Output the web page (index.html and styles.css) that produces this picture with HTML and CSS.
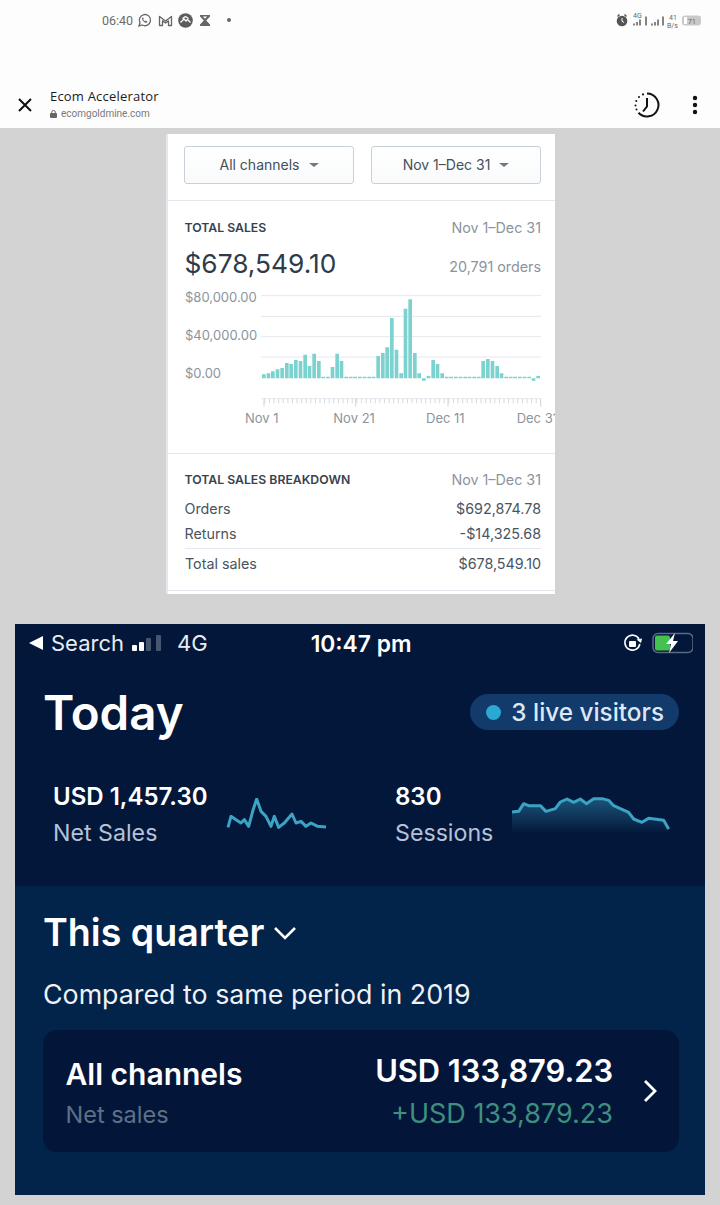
FILE: index.html
```html
<!DOCTYPE html>
<html lang="en">
<head>
  <meta charset="UTF-8" />
  <meta name="viewport" content="width=device-width, initial-scale=1.0"/>
  <title>Ecom Accelerator</title>
  <link rel="stylesheet" href="styles.css">
</head>
<body>

  <header class="browser">
    <div class="device-status">
      <div class="device-left">
        <span class="clock">06:40</span>
        <svg class="note" width="15" height="15" viewBox="0 0 15 15"><path d="M2 13l1-3.200a5.600 5.600 0 1 1 2.200 2.200z" fill="none" stroke="#666" stroke-width="1.300"/><path d="M5.300 4.700c-.8 1 .1 2.600 1.300 3.700s2.500 1.700 3.300 1l.4-1-1.500-.8-.7.700c-.9-.4-1.500-1-2-2l.6-.6-.7-1.500z" fill="#666"/></svg>
        <svg class="note" width="15" height="13" viewBox="0 0 15 13"><path d="M1.500 11.500V2.500L7.500 7l6-4.500v9h-3V6.800L7.500 9 4.500 6.800v4.700z" fill="none" stroke="#666" stroke-width="1.300" stroke-linejoin="round"/></svg>
        <svg class="note" width="15" height="15" viewBox="0 0 15 15"><circle cx="7.500" cy="7.500" r="7.300" fill="#5c5c5c"/><path d="M2.500 9.500L6 6l2 2 1.500-1.500 3 3M4.500 5.500L7.500 3.500l3 2" fill="none" stroke="#fff" stroke-width="1.300"/></svg>
        <svg class="note" width="12" height="13" viewBox="0 0 12 13"><path d="M1 1h10v1.500L7.200 6.500 11 10.500V12H1v-1.500l3.800-4L1 2.500z" fill="#666"/><path d="M3.800 2.400h4.400L6 4.800z" fill="#fff"/></svg>
        <span class="note-dot"></span>
      </div>
      <svg class="device-right" width="90" height="24" viewBox="615 8 90 24">
        <circle cx="622" cy="21" r="5.300" fill="#555"/>
        <path d="M617.500 16.500l2-2M626.500 16.500l-2-2" stroke="#555" stroke-width="1.500"/>
        <path d="M622 18v3.200l2 1.300" stroke="#fff" fill="none"/>
        <text class="tiny" x="633" y="18">4G</text>
        <path d="M634 25.500v-2M637 25.500v-3.500M640 25.500v-6M646 25.500v-9M652 25.500v-2M655 25.500v-3.500M658 25.500v-6M663 25.500v-9" stroke="#666" stroke-width="1.600"/>
        <text class="tiny" x="669" y="20">41</text>
        <text class="tiny" x="667" y="28">B/s</text>
        <rect x="682" y="15.500" width="19" height="10" rx="3" fill="#c9c9c9"/>
        <rect x="684" y="17" width="3" height="7" fill="#fff"/>
        <text class="tiny" x="688" y="24" font-size="8">71</text>
      </svg>
    </div>
    <div class="tab-row">
      <svg class="close-x" width="16" height="16" viewBox="0 0 16 16"><path d="M2 2l12 12M14 2L2 14" stroke="#111" stroke-width="2"/></svg>
      <div class="tab-title">
        <div class="tab-name">Ecom Accelerator</div>
        <div class="tab-url">
          <svg width="7" height="8" viewBox="0 0 7 8"><path d="M1.700 3.500V2.200a1.800 1.800 0 0 1 3.600 0v1.300" fill="none" stroke="#666"/><rect y="3" width="7" height="5" rx="1" fill="#666"/></svg>
          ecomgoldmine.com
        </div>
      </div>
      <svg class="history" width="28" height="28" viewBox="0 0 28 28">
        <path d="M14 2.500a11.500 11.500 0 1 1-8.500 19.300" fill="none" stroke="#111" stroke-width="2"/>
        <path d="M14 7v8.500l-4 5" fill="none" stroke="#111" stroke-width="2"/>
        <path d="M10 3.300v.1M6 6v.1M3.300 10v.1M2.500 14.500v.1M3.500 18.500v.1" stroke="#111" stroke-width="2" stroke-linecap="round"/>
      </svg>
      <svg class="kebab" width="6" height="20" viewBox="0 0 6 20"><circle cx="3" cy="3" r="2.200"/><circle cx="3" cy="10" r="2.200"/><circle cx="3" cy="17" r="2.200"/></svg>
    </div>
  </header>

  <section class="report">
    <div class="filters">
      <button class="filter">All channels <span class="caret"></span></button>
      <button class="filter">Nov 1–Dec 31 <span class="caret"></span></button>
    </div>

    <div class="sales">
      <div class="line-head">
        <span class="caps">TOTAL SALES</span>
        <span class="muted">Nov 1–Dec 31</span>
      </div>
      <div class="line-total">
        <span class="amount">$678,549.10</span>
        <span class="muted orders">20,791 orders</span>
      </div>
      <svg class="bars" width="389" height="150" viewBox="3 0 1167 450">
        <path d="M288 32H1128M288 94H1128M288 155H1128M288 216H1128M288 341H1128" stroke="#e4e8ee" stroke-width="3" fill="none"/>
        <path d="M298 348H1128" stroke="#d5dae0" stroke-width="14" stroke-dasharray="3 10.800" fill="none"/>
        <path d="M297 341v24M572 341v24M849 341v24M1127 341v24" stroke="#cfd5dc" stroke-width="3" fill="none"/>
        <path class="bar-fill" d="M291 268h11v12h-11zM305 265h11v15h-11zM318 259h11v21h-11zM332 253h11v27h-11zM346 249h11v31h-11zM360 234h11v46h-11zM373 237h11v43h-11zM387 225h11v55h-11zM401 228h11v52h-11zM415 209h11v71h-11zM428 243h11v37h-11zM442 206h11v74h-11zM456 228h11v52h-11zM469 275h11v5h-11zM483 275h11v5h-11zM497 246h11v34h-11zM511 206h11v74h-11zM524 228h11v52h-11zM538 275h11v5h-11zM552 275h11v5h-11zM565 275h11v5h-11zM579 275h11v5h-11zM593 275h11v5h-11zM607 275h11v5h-11zM620 275h11v5h-11zM634 213h11v67h-11zM648 204h11v76h-11zM661 187h11v93h-11zM675 99h11v181h-11zM689 194h11v86h-11zM703 265h11v15h-11zM716 71h11v209h-11zM730 43h11v237h-11zM744 204h11v76h-11zM757 265h11v15h-11zM771 280h11v7h-11zM785 273h11v7h-11zM799 225h11v55h-11zM812 237h11v43h-11zM826 265h11v15h-11zM840 275h11v5h-11zM853 275h11v5h-11zM867 275h11v5h-11zM881 275h11v5h-11zM895 275h11v5h-11zM908 275h11v5h-11zM922 275h11v5h-11zM936 275h11v5h-11zM949 228h11v52h-11zM963 222h11v58h-11zM977 228h11v52h-11zM991 243h11v37h-11zM1004 265h11v15h-11zM1018 275h11v5h-11zM1032 275h11v5h-11zM1045 275h11v5h-11zM1059 275h11v5h-11zM1073 275h11v5h-11zM1087 275h11v5h-11zM1100 280h11v7h-11zM1114 273h11v7h-11z"/>
        <text class="axis" x="60" y="52">$80,000.00</text>
        <text class="axis" x="60" y="166">$40,000.00</text>
        <text class="axis" x="60" y="280">$0.00</text>
        <text class="axis" x="240" y="415">Nov 1</text>
        <text class="axis" x="505" y="415">Nov 21</text>
        <text class="axis" x="783" y="415">Dec 11</text>
        <text class="axis" x="1055" y="415">Dec 31</text>
      </svg>
    </div>

    <div class="breakdown">
      <div class="line-head">
        <span class="caps">TOTAL SALES BREAKDOWN</span>
        <span class="muted">Nov 1–Dec 31</span>
      </div>
      <div class="line-row"><span>Orders</span><span>$692,874.78</span></div>
      <div class="line-row"><span>Returns</span><span>-$14,325.68</span></div>
      <div class="line-row line-sum"><span>Total sales</span><span>$678,549.10</span></div>
    </div>
  </section>

  <section class="mobile">
    <div class="today">
      <div class="ios-status">
        <div class="ios-left">
          <svg width="14" height="14" viewBox="0 0 14 14"><path d="M14 0v14L0 7z" fill="#fff"/></svg>
          <span class="ios-search">Search</span>
          <svg class="signal" width="30" height="22" viewBox="0 0 30 22"><rect x="0" y="13" width="5" height="6" rx="1" fill="#fff"/><rect x="7" y="10" width="5" height="9" rx="1" fill="#fff"/><rect x="14" y="6" width="5" height="13" rx="1" fill="#47566f"/><rect x="24" y="3" width="5" height="16" rx="1" fill="#47566f"/></svg>
          <span class="ios-net">4G</span>
        </div>
        <span class="ios-time">10:47 pm</span>
        <svg class="ios-right" width="70" height="22" viewBox="0 0 70 22">
          <path d="M16 7a7.500 7.500 0 1 0 .8 5" fill="none" stroke="#fff" stroke-width="1.600"/>
          <path d="M13.500 7.500l5.500-1-1 4.500z" fill="#fff"/>
          <rect x="6" y="9" width="7" height="6" rx="1" fill="#fff"/>
          <rect x="31" y="1.500" width="40" height="19" rx="5" fill="none" stroke="#5c6a80" stroke-width="1.500" transform="translate(-1 0)"/>
          <rect x="32" y="3.500" width="15" height="15" rx="2" fill="#43c24f"/>
          <path d="M52 1l-9 11h5l-2 9 9-12h-5z" fill="#fff"/>
        </svg>
      </div>

      <div class="today-head">
        <h1>Today</h1>
        <div class="visitors"><span class="live-dot"></span>3 live visitors</div>
      </div>

      <div class="stats">
        <div class="stat stat-sales">
          <div class="stat-text">
            <div class="stat-value">USD 1,457.30</div>
            <div class="stat-label">Net Sales</div>
          </div>
          <svg class="spark-sales" width="104" height="36" viewBox="0 0 312 108">
            <path class="spark" d="M6 88L15 55 30 65 45 75 55 65 68 85 80 40 92 3 105 40 120 55 135 85 145 55 158 88 175 75 198 48 210 75 225 70 240 85 255 75 275 85 300 87"/>
          </svg>
        </div>
        <div class="stat stat-sessions">
          <div class="stat-text">
            <div class="stat-value">830</div>
            <div class="stat-label">Sessions</div>
          </div>
          <svg class="spark-sessions" width="158" height="50" viewBox="0 0 474 150">
            <defs>
              <linearGradient id="sessionFade" x1="0" y1="0" x2="0" y2="1">
                <stop offset="0" stop-color="#2f86ad" stop-opacity=".55"/>
                <stop offset="1" stop-color="#2f86ad" stop-opacity="0"/>
              </linearGradient>
            </defs>
            <path fill="url(#sessionFade)" d="M0 45L20 43 35 20 50 26 85 26 102 43 130 35 145 15 165 6 185 16 205 6 223 20 245 5 270 5 290 10 305 26 350 46 365 66 390 76 410 64 455 70 470 96V110H0z"/>
            <path class="spark" d="M0 45L20 43 35 20 50 26 85 26 102 43 130 35 145 15 165 6 185 16 205 6 223 20 245 5 270 5 290 10 305 26 350 46 365 66 390 76 410 64 455 70 470 96"/>
          </svg>
        </div>
      </div>
    </div>

    <div class="quarter">
      <h2>This quarter
        <svg width="24" height="14" viewBox="0 0 24 14"><path d="M2 2l10 10L22 2" fill="none" stroke="#fff" stroke-width="2.600"/></svg>
      </h2>
      <p class="compare">Compared to same period in 2019</p>
      <div class="channel-card">
        <div class="channel-left">
          <div class="channel-name">All channels</div>
          <div class="channel-sub">Net sales</div>
        </div>
        <div class="channel-right">
          <div class="channel-total">USD 133,879.23</div>
          <div class="channel-diff">+USD 133,879.23</div>
        </div>
        <svg class="chevron" width="16" height="24" viewBox="0 0 16 24"><path d="M3 2l10 10L3 22" fill="none" stroke="#fff" stroke-width="2.800"/></svg>
      </div>
    </div>
  </section>

</body>
</html>
```

FILE: styles.css
```css
* {
  box-sizing: border-box;
}

body {
  margin: 0;
  width: 720px;
  height: 1205px;
  overflow: hidden;
  background-color: #d3d3d3;
  font-family: Inter, "Liberation Sans", sans-serif;
}

/* browser chrome */
.browser {
  height: 128px;
  background-color: #fdfdfd;
}

.device-status {
  height: 40px;
  display: flex;
  justify-content: space-between;
  align-items: center;
  padding: 0 15px 0 102px;
}

.device-left {
  display: flex;
  align-items: center;
  gap: 5.5px;
  color: #6b6b6b;
  font-family: Roboto, sans-serif;
  font-size: 12.5px;
}

.clock {
  margin-right: -1.5px;
}

.note-dot {
  width: 4px;
  height: 4px;
  margin-left: 11px;
  border-radius: 50%;
  background-color: #666;
}

.tiny {
  font-family: Roboto, sans-serif;
  font-size: 7px;
  fill: #666;
}

.tab-row {
  height: 49px;
  margin-top: 39px;
  display: flex;
  align-items: center;
  padding: 2px 22px 0 17px;
}

.tab-title {
  flex: 1;
  margin-left: 17px;
}

.tab-name {
  font-family: "Open Sans", sans-serif;
  font-size: 13px;
  line-height: 17px;
  letter-spacing: 0.2px;
  color: #1c1c1c;
}

.tab-url {
  display: flex;
  align-items: center;
  gap: 4px;
  margin-top: 2px;
  font-family: Roboto, sans-serif;
  font-size: 10px;
  line-height: 14px;
  color: #7a7a7a;
}

.history {
  margin-right: 31px;
}

.kebab {
  fill: #111;
}

/* sales report */
.report {
  width: 389px;
  height: 460px;
  margin: 6px 0 0 166px;
  background-color: #fff;
  border-left: 2px solid #e4e8ee;
  overflow: hidden;
}

.filters {
  height: 67px;
  display: flex;
  gap: 17px;
  padding: 12px 14px 0 16px;
  border-bottom: 1px solid #e4e8ee;
}

.filter {
  width: 170px;
  height: 38px;
  display: flex;
  align-items: center;
  justify-content: center;
  gap: 9px;
  padding-bottom: 2px;
  font-family: inherit;
  font-size: 14px;
  color: #444f5c;
  background: linear-gradient(#fff, #f9fafb);
  border: 1px solid #c8d0d8;
  border-radius: 3px;
}

.caret {
  width: 0;
  height: 0;
  border-left: 5px solid transparent;
  border-right: 5px solid transparent;
  border-top: 4px solid #6e7882;
}

.sales {
  height: 253px;
  padding-top: 17px;
  border-bottom: 1px solid #e4e8ee;
}

.line-head,
.line-total,
.line-row {
  display: flex;
  justify-content: space-between;
  align-items: center;
  padding: 0 14px 0 16.5px;
}

.line-head {
  height: 18px;
}

.line-total {
  height: 34px;
  margin-top: 10px;
}

.caps {
  font-size: 12.25px;
  font-weight: 600;
  color: #38424e;
}

.muted {
  font-size: 14.3px;
  color: #8c949e;
}

.orders {
  margin-top: 6px;
}

.amount {
  font-size: 26.3px;
  color: #2f3b48;
}

.bars {
  display: block;
  margin: 5px 0 0 -2px;
}

.bar-fill {
  fill: #7bd2cf;
}

.axis {
  font-family: Inter, sans-serif;
  font-size: 39px;
  fill: #8c949e;
}

.breakdown {
  height: 137px;
  padding-top: 16px;
  border-bottom: 1px solid #e4e8ee;
}

.line-row {
  height: 25px;
  font-size: 14.3px;
  color: #4a5460;
}

.line-head + .line-row {
  margin-top: 8px;
}

.line-sum {
  height: 29px;
  margin: 2px 14px 0 17px;
  padding: 0;
  border-top: 1px solid #e4e8ee;
}

/* mobile app shot */
.mobile {
  width: 690px;
  height: 571px;
  margin: 30px 0 0 15px;
  color: #fff;
}

.today {
  height: 262px;
  padding: 0 26px 0 14px;
  background-color: #03173a;
}

.ios-status {
  height: 38px;
  display: flex;
  align-items: center;
}

.ios-left {
  display: flex;
  align-items: center;
  font-size: 22px;
  color: #e8ecf2;
}

.ios-search {
  margin-left: 8px;
}

.signal {
  margin-left: 8px;
}

.ios-net {
  margin-left: 15px;
}

.ios-time {
  margin-left: 103px;
  font-size: 22.8px;
  font-weight: 600;
}

.ios-right {
  margin-left: auto;
  margin-right: -14px;
}

.today-head {
  display: flex;
  justify-content: space-between;
  align-items: center;
  padding: 0 0 0 14px;
  margin-top: 25px;
}

h1 {
  margin: 0;
  font-size: 47.5px;
  line-height: 52px;
  font-weight: 600;
}

.visitors {
  height: 36px;
  display: flex;
  align-items: center;
  gap: 10px;
  padding: 0 15px 0 16px;
  margin-top: -2px;
  font-size: 24.3px;
  font-weight: 500;
  color: #dfe8f2;
  background-color: #123a6b;
  border-radius: 18px;
}

.live-dot {
  width: 15px;
  height: 15px;
  border-radius: 50%;
  background-color: #2aa9d2;
}

.stats {
  display: flex;
  margin-top: 43px;
  padding-left: 24px;
}

.stat {
  display: flex;
  align-items: center;
}

.stat-sales {
  width: 342px;
  gap: 18px;
}

.stat-sessions {
  gap: 19px;
}

.spark-sales {
  margin-top: 2px;
}

.spark-sessions {
  margin-top: 14px;
}

.stat-value {
  font-size: 24px;
  line-height: 30px;
  font-weight: 600;
}

.stat-label {
  margin-top: 6px;
  font-size: 23.2px;
  line-height: 30px;
  color: #b6c2d8;
}

.spark {
  fill: none;
  stroke: #3ba3c4;
  stroke-width: 9;
  stroke-linejoin: round;
}

.quarter {
  height: 309px;
  padding: 23px 26px 0 28px;
  background-color: #02234a;
}

h2 {
  display: flex;
  align-items: center;
  gap: 9px;
  margin: 0;
  font-size: 37.6px;
  line-height: 48px;
  font-weight: 600;
}

.compare {
  margin: 19px 0 0;
  font-size: 26.8px;
  line-height: 36px;
  color: #eef2f7;
}

.channel-card {
  height: 122px;
  display: flex;
  align-items: center;
  margin-top: 18px;
  padding: 0 21px 0 22.5px;
  background-color: #03163a;
  border-radius: 14px;
}

.channel-left {
  flex: 1;
  padding-top: 2px;
}

.channel-name {
  font-size: 30px;
  line-height: 38px;
  font-weight: 600;
}

.channel-sub {
  margin-top: 7px;
  font-size: 23.5px;
  line-height: 30px;
  color: #5d7187;
}

.channel-right {
  text-align: right;
  padding-top: 2px;
}

.channel-total {
  margin-top: -3px;
  font-size: 30.8px;
  line-height: 38px;
  font-weight: 600;
}

.channel-diff {
  margin-top: 9px;
  font-size: 27px;
  line-height: 30px;
  color: #3f8f7e;
}

.chevron {
  margin-left: 29px;
}
```
